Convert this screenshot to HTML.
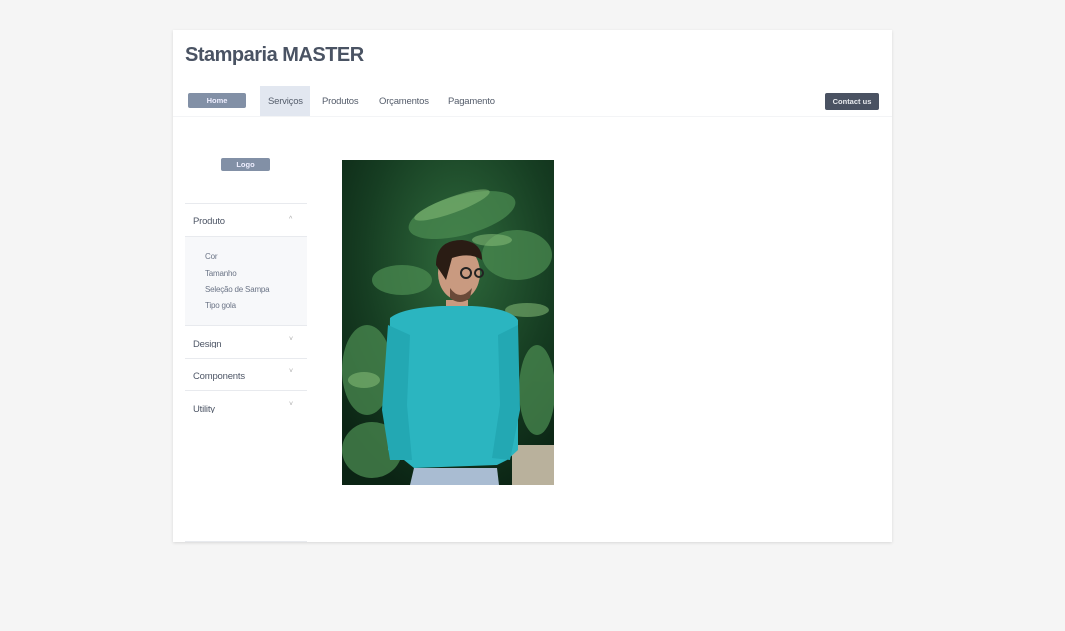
<!DOCTYPE html>
<html><head><meta charset="utf-8">
<style>
*{margin:0;padding:0;box-sizing:border-box}
body{width:1065px;height:631px;background:#f5f5f5;font-family:"Liberation Sans",sans-serif;position:relative;overflow:hidden}
.card{position:absolute;left:173px;top:30px;width:719px;height:512px;background:#fff;box-shadow:0 1px 3px rgba(0,0,0,.12)}
.abs{position:absolute}
h1{position:absolute;left:12px;top:14px;font-size:20px;font-weight:bold;color:#4a5363;letter-spacing:-0.5px}
.nav{font-size:9.5px;color:#555d6b;letter-spacing:-0.2px}
.btn{background:#8290a6;color:#eef;border-radius:2px;font-size:7.5px;text-align:center;font-weight:bold}
.line{position:absolute;left:12px;width:122px;height:1px;background:#e8eaee}
.side{font-size:9.5px;color:#4e5666;letter-spacing:-0.2px}
.sub{font-size:8px;color:#6b7486;letter-spacing:-0.2px}
.chev{font-size:7px;color:#aaa}
</style></head><body>
<div class="card">
<h1>Stamparia MASTER</h1>
<div class="abs" style="left:0;top:56px;width:719px;height:31px;border-bottom:1px solid #f3f4f6"></div>
<div class="abs btn" style="left:15px;top:63px;width:58px;height:15px;line-height:15px">Home</div>
<div class="abs" style="left:87px;top:56px;width:50px;height:30px;background:#e2e7f0"></div>
<div class="abs nav" style="left:95px;top:66px">Serviços</div>
<div class="abs nav" style="left:149px;top:66px">Produtos</div>
<div class="abs nav" style="left:206px;top:66px">Orçamentos</div>
<div class="abs nav" style="left:275px;top:66px">Pagamento</div>
<div class="abs btn" style="left:652px;top:63px;width:54px;height:17px;line-height:17px;background:#4a5262;color:#e8eaee">Contact us</div>
<div class="abs btn" style="left:48px;top:128px;width:49px;height:13px;line-height:13px">Logo</div>
<div class="line" style="top:173px"></div>
<div class="abs side" style="left:20px;top:186px">Produto</div><div class="abs chev" style="left:116px;top:186px">^</div>
<div class="line" style="top:206px"></div>
<div class="abs" style="left:12px;top:207px;width:122px;height:88px;background:#f7f8fa"></div>
<div class="abs sub" style="left:32px;top:222px">Cor</div>
<div class="abs sub" style="left:32px;top:239px">Tamanho</div>
<div class="abs sub" style="left:32px;top:255px">Seleção de Sampa</div>
<div class="abs sub" style="left:32px;top:271px">Tipo gola</div>
<div class="line" style="top:295px"></div>
<div class="abs side" style="left:20px;top:309px;height:9px;overflow:hidden">Design</div><div class="abs chev" style="left:116px;top:306px">˅</div>
<div class="line" style="top:328px"></div>
<div class="abs side" style="left:20px;top:341px">Components</div><div class="abs chev" style="left:116px;top:338px">˅</div>
<div class="line" style="top:360px"></div>
<div class="abs side" style="left:20px;top:374px;height:9px;overflow:hidden">Utility</div><div class="abs chev" style="left:116px;top:371px">˅</div>
<div class="line" style="top:511px"></div>
<svg class="abs" style="left:169px;top:130px" width="212" height="325" viewBox="0 0 212 325">
<defs><radialGradient id="g" cx="55%" cy="30%" r="75%"><stop offset="0" stop-color="#2f6a3c"/><stop offset="0.6" stop-color="#163d22"/><stop offset="1" stop-color="#0b2414"/></radialGradient></defs>
<rect width="212" height="325" fill="url(#g)"/>
<g fill="#4a8a50" opacity=".75">
<ellipse cx="120" cy="55" rx="55" ry="20" transform="rotate(-15 120 55)"/><ellipse cx="175" cy="95" rx="35" ry="25"/><ellipse cx="25" cy="210" rx="25" ry="45"/><ellipse cx="195" cy="230" rx="18" ry="45"/><ellipse cx="30" cy="290" rx="30" ry="28"/><ellipse cx="60" cy="120" rx="30" ry="15"/>
</g>
<g fill="#86bd78" opacity=".55"><ellipse cx="110" cy="45" rx="40" ry="8" transform="rotate(-20 110 45)"/><ellipse cx="185" cy="150" rx="22" ry="7"/><ellipse cx="22" cy="220" rx="16" ry="8"/><ellipse cx="150" cy="80" rx="20" ry="6"/></g>
<rect x="170" y="285" width="42" height="40" fill="#b9b19c"/>
<path d="M72 308 L155 308 L157 325 L68 325 Z" fill="#a9bcd2"/>
<rect x="104" y="140" width="22" height="16" fill="#c99a80"/>
<path d="M48 158 Q60 148 100 146 L130 146 Q168 148 176 160 L176 290 L165 300 L155 305 L72 308 L62 300 L46 290 Z" fill="#2bb5c0"/>
<path d="M46 165 L40 250 L48 300 L70 300 L65 245 L68 175 Z" fill="#23a8b3"/>
<path d="M176 165 L178 250 L168 300 L150 298 L158 245 L156 175 Z" fill="#23a8b3"/>
<ellipse cx="117" cy="113" rx="21" ry="27" fill="#c99a80"/>
<path d="M94 105 Q94 80 120 80 Q140 82 140 100 Q128 92 110 98 L104 120 Z" fill="#2a1c14"/>
<path d="M108 128 Q118 142 130 128 L128 138 Q118 146 108 138 Z" fill="#6a4a38"/>
<g fill="none" stroke="#222" stroke-width="2"><circle cx="124" cy="113" r="5"/><circle cx="137" cy="113" r="4"/></g>
</svg>
</div>
</body></html>
